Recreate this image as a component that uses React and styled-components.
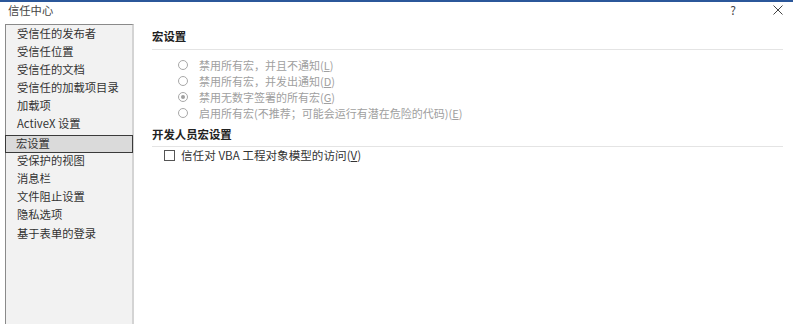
import React from "react";
import styled, { createGlobalStyle } from "styled-components";

const Global = createGlobalStyle`
  html, body { margin: 0; padding: 0; background: #fff; }
  body { font-family: "Microsoft YaHei", "Noto Sans CJK SC", sans-serif; }
  * { box-sizing: border-box; }
`;

const Window = styled.div`
  width: 793px;
  height: 324px;
  display: flex;
  flex-direction: column;
  border-top: 2px solid #2b579a;
  background: #fff;
  overflow: hidden;
`;

const TitleBar = styled.div`
  height: 22px;
  display: flex;
  align-items: flex-start;
  gap: 15px;
  padding: 0 0 0 8px;
  font-size: 11.3px;
  line-height: 16px;
  color: #444;
`;

const Title = styled.div`
  flex: 1;
`;

const TitleBtn = styled.div`
  width: 30px;
  height: 16px;
  display: flex;
  align-items: center;
  justify-content: center;
  font-size: 12px;
  color: #444;
`;

const Body = styled.div`
  flex: 1;
  display: flex;
  min-height: 0;
`;

const Sidebar = styled.div`
  width: 129px;
  margin-left: 5px;
  background: #f2f2f2;
  border-left: 1px solid #8a8a8a;
  border-top: 1px solid #8a8a8a;
  border-right: 2px solid #d4d4d4;
  display: flex;
  flex-direction: column;
`;

const NavItem = styled.div`
  height: 18.1px;
  flex: none;
  display: flex;
  align-items: center;
  padding-left: ${p => (p.$active ? "10px" : "11px")};
  padding-bottom: ${p => (p.$active ? "2px" : "3px")};
  margin-top: ${p => (p.$active ? "1px" : "0")};
  font-size: 11.3px;
  color: #333;
  white-space: nowrap;
  ${p =>
    p.$active &&
    `
    background: #dadada;
    border: 1.5px solid #3a3a3a;
    margin-left: -1px;
    margin-right: -1px;
  `}
`;

const Content = styled.div`
  flex: 1;
  display: flex;
  flex-direction: column;
  padding: 4px 10px 0 18px;
`;

const SectionTitle = styled.div`
  font-size: 11.4px;
  font-weight: bold;
  color: #222;
  height: 16px;
  display: flex;
  align-items: center;
  margin-top: ${p => p.$mt || "0"};
`;

const Rule = styled.div`
  height: 1px;
  background: #e4e4e4;
  margin: ${p => p.$m || "5px 0 3px"};
`;

const RadioList = styled.div`
  display: flex;
  flex-direction: column;
  padding-left: 26px;
`;

const RadioRow = styled.div`
  height: 16px;
  display: flex;
  align-items: center;
  gap: 11px;
  font-size: 11px;
  color: #a0a0a0;
`;

const RadioCircle = styled.span`
  width: 10px;
  height: 10px;
  flex: none;
  border-radius: 50%;
  border: 1px solid #a8a8a8;
  display: flex;
  align-items: center;
  justify-content: center;
  &::after {
    content: "";
    width: 4px;
    height: 4px;
    border-radius: 50%;
    background: ${p => (p.$checked ? "#a0a0a0" : "transparent")};
  }
`;

const CheckRow = styled.div`
  height: 16px;
  display: flex;
  align-items: center;
  gap: 6px;
  padding-left: 12px;
  font-size: 11.6px;
  color: #333;
`;

const CheckBox = styled.span`
  width: 11px;
  height: 11px;
  flex: none;
  border: 1px solid #555;
  background: #fff;
`;

const U = styled.span`
  text-decoration: underline;
`;

const navItems = [
  "受信任的发布者",
  "受信任位置",
  "受信任的文档",
  "受信任的加载项目录",
  "加载项",
  "ActiveX 设置",
  "宏设置",
  "受保护的视图",
  "消息栏",
  "文件阻止设置",
  "隐私选项",
  "基于表单的登录",
];

const radios = [
  { pre: "禁用所有宏，并且不通知(", key: "L", checked: false },
  { pre: "禁用所有宏，并发出通知(", key: "D", checked: false },
  { pre: "禁用无数字签署的所有宏(", key: "G", checked: true },
  { pre: "启用所有宏(不推荐；可能会运行有潜在危险的代码)(", key: "E", checked: false },
];

export default function App() {
  return (
    <>
      <Global />
      <Window>
        <TitleBar>
          <Title>信任中心</Title>
          <TitleBtn>?</TitleBtn>
          <TitleBtn>
            <svg width="10" height="10" viewBox="0 0 10 10">
              <path d="M0.5 0.5L9.5 9.5M9.5 0.5L0.5 9.5" stroke="#444" strokeWidth="1" />
            </svg>
          </TitleBtn>
        </TitleBar>
        <Body>
          <Sidebar>
            {navItems.map(n => (
              <NavItem key={n} $active={n === "宏设置"}>
                {n}
              </NavItem>
            ))}
          </Sidebar>
          <Content>
            <SectionTitle>宏设置</SectionTitle>
            <Rule $m="5px 0 7px" />
            <RadioList>
              {radios.map(r => (
                <RadioRow key={r.key}>
                  <RadioCircle $checked={r.checked} />
                  <span>
                    {r.pre}
                    <U>{r.key}</U>)
                  </span>
                </RadioRow>
              ))}
            </RadioList>
            <SectionTitle $mt="5px">开发人员宏设置</SectionTitle>
            <Rule $m="4px 0 0" />
            <CheckRow>
              <CheckBox />
              <span>
                信任对 VBA 工程对象模型的访问(<U>V</U>)
              </span>
            </CheckRow>
          </Content>
        </Body>
      </Window>
    </>
  );
}
